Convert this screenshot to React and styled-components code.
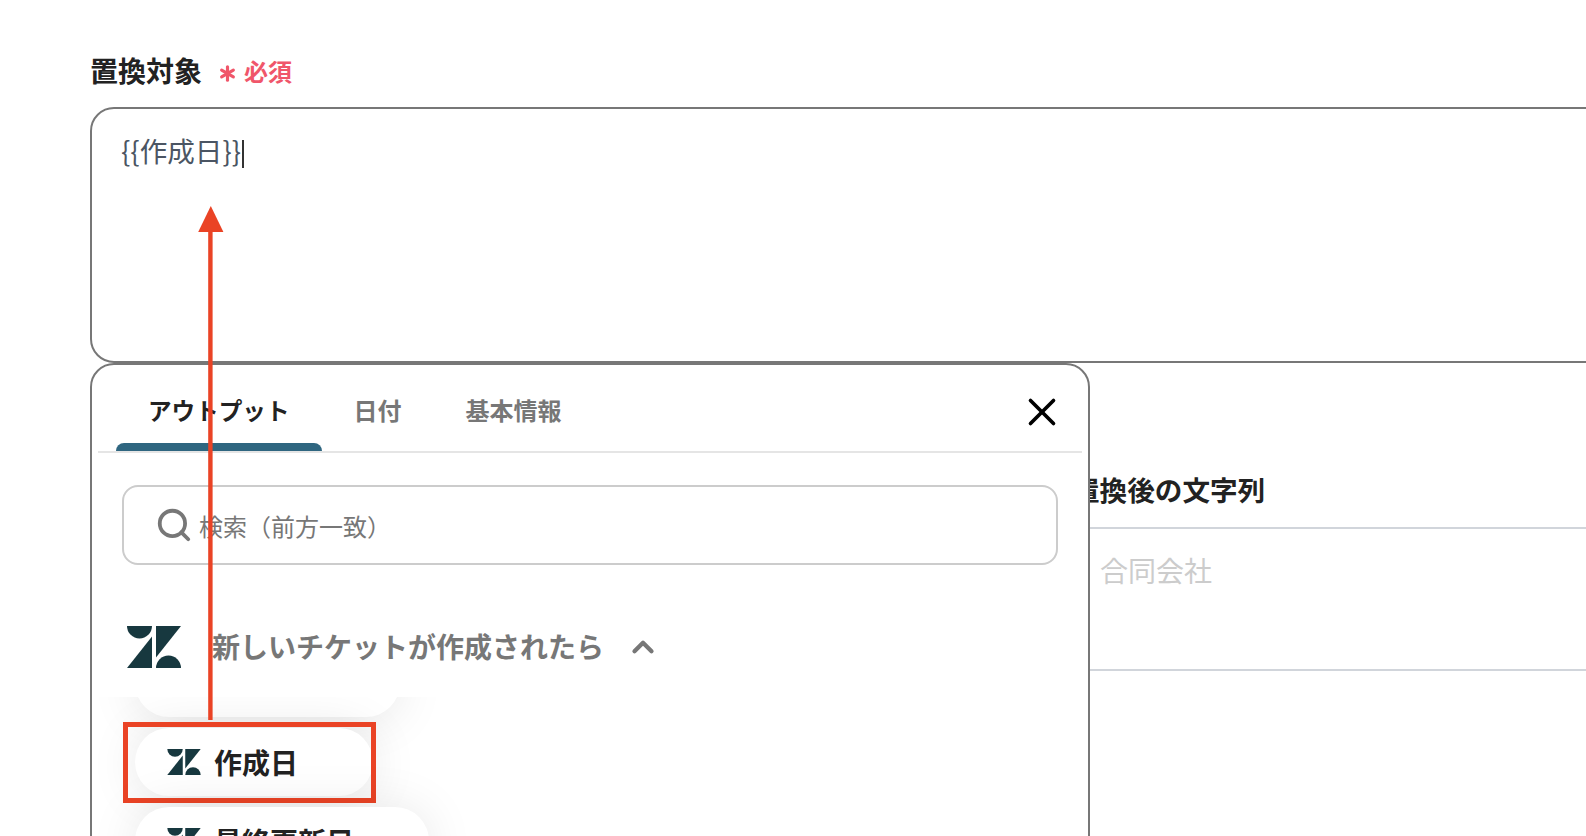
import styled, { createGlobalStyle } from "styled-components";
import { Asterisk, ChevronUp, Search, X } from "lucide-react";

const GlobalStyle = createGlobalStyle`
  html, body {
    margin: 0;
    padding: 0;
    background: #fff;
  }
  * {
    box-sizing: border-box;
  }
`;

const Page = styled.div`
  position: relative;
  width: 1586px;
  height: 836px;
  padding: 50px 0 0 90px;
  overflow: hidden;
  background: #fff;
  font-family: "Noto Sans CJK JP", "Noto Sans", sans-serif;
`;

const LabelRow = styled.div`
  display: flex;
  align-items: center;
  height: 40px;
`;

const Label = styled.span`
  font-size: 28px;
  font-weight: 700;
  color: #222;
  line-height: 40px;
  white-space: nowrap;
`;

const Required = styled.span`
  display: flex;
  align-items: center;
  margin: 2px 0 0 12px;
  font-size: 24px;
  font-weight: 700;
  color: #f0566a;
  line-height: 40px;
  gap: 3px;
`;

const RequiredMark = styled(Asterisk)`
  margin-top: 4px;
`;

const TextArea = styled.div`
  width: 1600px;
  height: 256px;
  margin-top: 17px;
  padding: 19px 29px;
  border: 2px solid #777;
  border-radius: 24px;
  font-size: 27.6px;
  line-height: 44px;
  color: #4b5563;
`;

const Caret = styled.span`
  display: inline-block;
  width: 1.5px;
  height: 28px;
  margin-left: 1px;
  vertical-align: -6px;
  background: #333;
`;

const SecondField = styled.div`
  width: 1600px;
  margin: 106px 0 0 982px;
`;

const SecondLabel = styled(Label)`
  font-size: 27.6px;
`;

const UnderlinedInput = styled.div`
  height: 144px;
  margin-top: 18px;
  padding: 19px 0 0 28px;
  border-top: 2px solid #d1d5db;
  border-bottom: 2px solid #d1d5db;
  font-size: 28px;
  line-height: 44px;
  color: #ccc;
`;

const Popup = styled.div`
  position: absolute;
  top: 363px;
  left: 90px;
  width: 1000px;
  height: 560px;
  padding: 0 6px;
  background: #fff;
  border: 2px solid #777;
  border-radius: 24px;
`;

const Tabs = styled.div`
  display: flex;
  align-items: stretch;
  height: 88px;
  padding-left: 18px;
  border-bottom: 2px solid #e5e5e5;
`;

const Tab = styled.div`
  position: relative;
  display: flex;
  align-items: center;
  padding: 3px 32px 0;
  font-size: ${(props) => (props.$active ? "23.6px" : "24px")};
  font-weight: 700;
  color: ${(props) => (props.$active ? "#222" : "#777")};

  ${(props) =>
    props.$active &&
    `
    &::after {
      content: "";
      position: absolute;
      left: 0;
      right: 0;
      bottom: 0;
      height: 8px;
      background: #2f6680;
      border-radius: 8px 8px 0 0;
    }
  `}
`;

const CloseButton = styled.div`
  display: flex;
  align-items: center;
  margin: 0 17px 0 auto;
  padding-top: 8px;
  color: #000;
`;

const SearchBox = styled.div`
  display: flex;
  align-items: center;
  height: 80px;
  margin: 32px 24px 0;
  padding-left: 31px;
  border: 2px solid #ccc;
  border-radius: 16px;
  font-size: 24px;
  color: #777;
  gap: 6px;
`;

const SectionHeader = styled.div`
  display: flex;
  align-items: center;
  height: 70px;
  margin-top: 47px;
  padding-left: 29px;
  font-size: 28px;
  font-weight: 700;
  color: #777;
`;

const SectionTitle = styled.span`
  margin-left: 31px;
  margin-right: 22px;
  margin-top: -2px;
`;

const ItemClip = styled.div`
  height: 140px;
  margin: 15px -4px 0;
  padding-left: 41px;
  overflow: hidden;
`;

const ItemList = styled.div`
  display: flex;
  flex-direction: column;
  align-items: flex-start;
  margin-top: -48px;
  gap: 11px;
`;

const Item = styled.div`
  position: relative;
  display: flex;
  align-items: center;
  flex: none;
  height: 68px;
  min-width: ${(props) => props.$minWidth || 0}px;
  padding: 0 75px 0 32px;
  background: #fff;
  border-radius: 34px;
  box-shadow: 0 2px 50px rgba(0, 0, 0, 0.1);
  font-size: 28px;
  line-height: 40px;
  font-weight: 700;
  color: #222;
  gap: 13px;

  ${(props) =>
    props.$highlighted &&
    `
    &::after {
      content: "";
      position: absolute;
      top: -6px;
      left: -12px;
      right: -3px;
      bottom: -7px;
      border: 5px solid #ea4325;
    }
  `}
`;

const ArrowOverlay = styled.svg`
  position: absolute;
  top: 200px;
  left: 190px;
  pointer-events: none;
`;

const ZendeskLogo = ({ width, height }) => (
  <svg width={width} height={height} viewBox="0 0 54 42" fill="#17383f">
    <path d="M0 0H25A12.5 12.5 0 0 1 0 0Z" />
    <path d="M25 10.5V42H0Z" />
    <path d="M29 0H54L29 31.5Z" />
    <path d="M29 42A12.5 12.5 0 0 1 54 42Z" />
  </svg>
);

// the first row is scrolled away, only its lower edge is visible
const items = [
  { id: "scrolled", name: "", minWidth: 265 },
  { id: "created", name: "作成日", highlighted: true },
  { id: "updated", name: "最終更新日" },
];

const App = () => {
  return (
    <Page>
      <GlobalStyle />
      <LabelRow>
        <Label>置換対象</Label>
        <Required>
          <RequiredMark size={27} strokeWidth={2.8} />
          必須
        </Required>
      </LabelRow>
      <TextArea>
        {"{{作成日}}"}
        <Caret />
      </TextArea>

      <SecondField>
        <LabelRow>
          <SecondLabel>置換後の文字列</SecondLabel>
        </LabelRow>
        <UnderlinedInput>合同会社</UnderlinedInput>
      </SecondField>

      <Popup>
        <Tabs>
          <Tab $active>アウトプット</Tab>
          <Tab>日付</Tab>
          <Tab>基本情報</Tab>
          <CloseButton>
            <X size={46} strokeWidth={1.9} />
          </CloseButton>
        </Tabs>
        <SearchBox>
          <Search size={38} strokeWidth={2.4} />
          検索（前方一致）
        </SearchBox>
        <SectionHeader>
          <ZendeskLogo width={54} height={42} />
          <SectionTitle>新しいチケットが作成されたら</SectionTitle>
          <ChevronUp size={34} strokeWidth={3} />
        </SectionHeader>
        <ItemClip>
          <ItemList>
            {items.map((item) => (
              <Item key={item.id} $highlighted={item.highlighted} $minWidth={item.minWidth}>
                <ZendeskLogo width={34} height={26} />
                {item.name}
              </Item>
            ))}
          </ItemList>
        </ItemClip>
      </Popup>

      <ArrowOverlay width="40" height="525" viewBox="0 0 40 525">
        <rect x="18.2" y="28" width="4.4" height="492" fill="#ea4325" />
        <path d="M20.8 6L33.4 32H8.2Z" fill="#ea4325" />
      </ArrowOverlay>
    </Page>
  );
};

export default App;
